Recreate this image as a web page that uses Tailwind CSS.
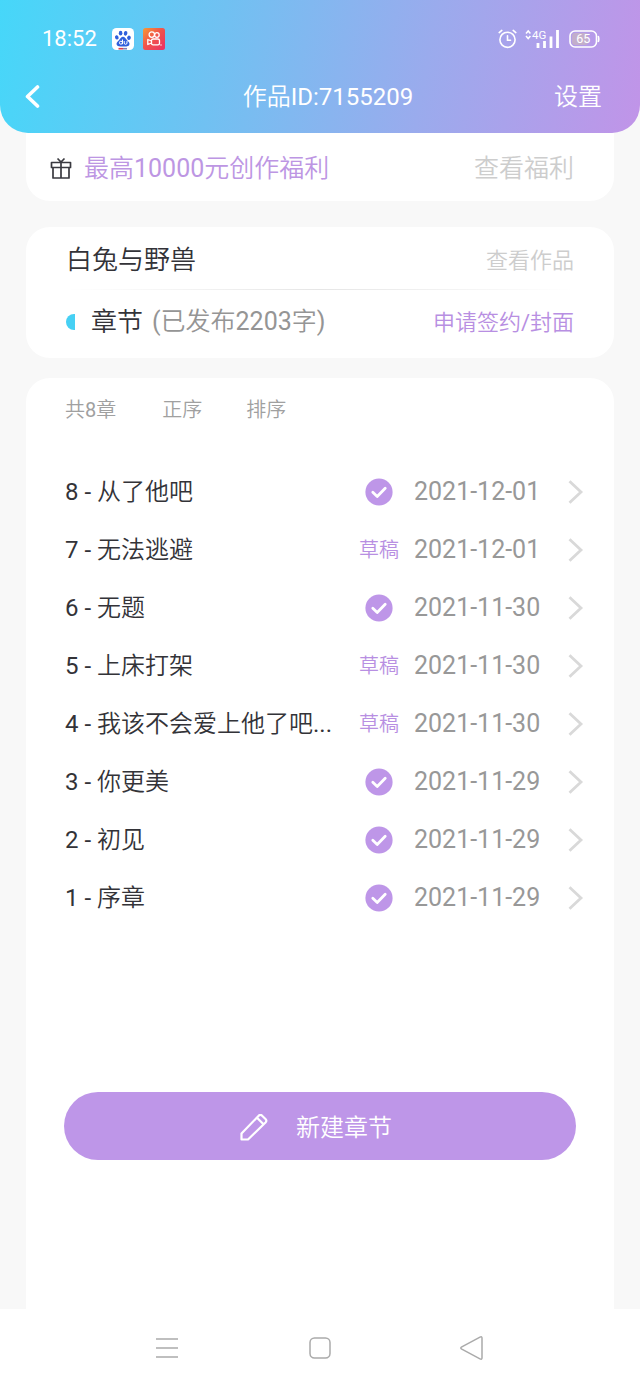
<!DOCTYPE html>
<html lang="zh-CN">
<head>
    <meta charset="UTF-8">
    <meta name="viewport" content="width=device-width, initial-scale=1.0">
    <title>作品ID:7155209</title>
    <script src="https://cdn.jsdelivr.net/npm/@tailwindcss/browser@4"></script>
</head>
<body class="flex min-h-screen flex-col bg-[#f8f8f8] font-['Roboto','Noto_Sans_CJK_SC_DemiLight','Noto_Sans_CJK_SC',sans-serif] text-[#333338]">
    <!-- Shared icons -->
    <svg class="hidden">
        <symbol id="icon-published" viewBox="0 0 28 28">
            <circle cx="14" cy="14" r="13.6" fill="#be96e8"/>
            <path d="M7.8 14.2l4.4 4.2 8-8.2" fill="none" stroke="#fff" stroke-width="2.8" stroke-linecap="round" stroke-linejoin="round"/>
        </symbol>
        <symbol id="icon-next" viewBox="0 0 16 24">
            <path d="M1.5 1.2L13 12 1.5 22.8" fill="none" stroke="#d9d9d9" stroke-width="2.8"/>
        </symbol>
    </svg>

    <!-- Header -->
    <header class="rounded-b-[28px] bg-linear-[100deg,#46d7f9_0%,#70c1f2_34%,#9aabed_66%,#c194e8_100%] text-white">
        <!-- Status bar -->
        <div class="flex h-[60px] items-center pr-10 pl-[42px] pt-[18px]">
            <span class="text-[22px] leading-none">18:52</span>
            <svg class="ml-[15px] size-[22px]" viewBox="0 0 22 22">
                <rect width="22" height="22" rx="4.5" fill="#fff"/>
                <g fill="#2f5fdc">
                    <ellipse cx="4.8" cy="9.4" rx="1.8" ry="2.2" transform="rotate(-15 4.8 9.4)"/>
                    <ellipse cx="8.6" cy="5.2" rx="1.8" ry="2.4"/>
                    <ellipse cx="13.6" cy="5.3" rx="1.8" ry="2.4" transform="rotate(10 13.6 5.3)"/>
                    <ellipse cx="17" cy="9.8" rx="1.8" ry="2.2" transform="rotate(15 17 9.8)"/>
                    <path d="M11 8.800c1.800 0 2.800 2.200 4 3.400 1.400 1.300 2.900 2.400 2.400 4.300-.5 2-3.200 2-6.400 2s-5.800 0-6.400-2c-.4-1.900 1-3 2.400-4.300C8.200 11 9.200 8.800 11 8.800z"/>
                </g>
                <g fill="none" stroke="#fff" stroke-width="1">
                    <circle cx="8.900" cy="14.700" r="1.500"/>
                    <path d="M10.500 11.500v4.700M12.200 13v2q0 1.300 1.400 1.300T15 15v-2"/>
                </g>
                <path d="M6.500 20.700H11" stroke="#e03a45" stroke-width="1.600"/>
                <path d="M11 20.700h4" stroke="#7d80b8" stroke-width="1.600"/>
            </svg>
            <svg class="ml-[9px] size-[22px]" viewBox="0 0 22 22">
                <defs>
                    <linearGradient id="video-bg" x1="0" y1="0" x2="1" y2="1">
                        <stop offset="0" stop-color="#f79a35"/>
                        <stop offset=".45" stop-color="#f1554a"/>
                        <stop offset="1" stop-color="#ea2f66"/>
                    </linearGradient>
                </defs>
                <rect width="22" height="22" rx="2.5" fill="url(#video-bg)"/>
                <g fill="none" stroke="#fff" stroke-width="1.300" stroke-linejoin="round">
                    <circle cx="8.800" cy="6.600" r="2.700"/>
                    <circle cx="13.900" cy="7" r="2.300"/>
                    <rect x="8.500" y="11" width="8" height="5.800" rx="1.600"/>
                    <path d="M8.500 13l-3.700-1.500v5l3.700-1.500"/>
                </g>
                <circle cx="18" cy="17" r=".7" fill="#fff"/>
            </svg>

            <svg class="ml-auto h-5 w-[19px]" viewBox="0 0 19 20" fill="none" stroke="#fff" stroke-width="1.600" stroke-linecap="round">
                <circle cx="9.500" cy="10.800" r="7.600"/>
                <path d="M9.500 6.800v4.500h3M1.200 3.600l2.600-2.200M17.800 3.600l-2.600-2.200"/>
            </svg>
            <svg class="ml-2 h-5 w-[35px]" viewBox="0 0 35 20">
                <path d="M1 4.500l2.200-2.500 2.200 2.500M1 7l2.200 2.500L5.400 7" fill="none" stroke="#fff" stroke-width="1.500"/>
                <text x="7" y="10" fill="#fff" font-size="11.500" font-family="Roboto">4G</text>
                <path d="M13 14v5M19.500 12v7M26 7.500V19M32.500 1v18" fill="none" stroke="#fff" stroke-width="2.800"/>
            </svg>
            <svg class="ml-[9px] h-[18px] w-[31px]" viewBox="0 0 31 18">
                <rect x="1" y="1" width="26.500" height="16" rx="5" fill="none" stroke="#fff" stroke-width="1.600"/>
                <rect x="3" y="3" width="16" height="12" rx="3" fill="#c3aecb"/>
                <path d="M29.200 6q1.200 3 0 6" fill="none" stroke="#fff" stroke-width="1.600"/>
                <text x="14.300" y="13.400" fill="#fff" font-size="12.500" font-family="Roboto" text-anchor="middle">65</text>
            </svg>
        </div>
        <!-- Title bar -->
        <div class="grid h-[73px] grid-cols-[1fr_auto_1fr] items-center px-6 text-2xl">
            <button type="button" aria-label="返回" class="justify-self-start">
                <svg class="block h-6 w-4" viewBox="0 0 16 24" fill="none" stroke="#fff" stroke-width="3.600" stroke-linecap="round" stroke-linejoin="round">
                    <path d="M13.500 2L3.500 11.500l10 9.500"/>
                </svg>
            </button>
            <h1 class="pl-4">作品ID:7155209</h1>
            <button type="button" class="mr-[14px] justify-self-end">设置</button>
        </div>
    </header>

    <main class="flex flex-1 flex-col px-[26px]">
        <!-- Bonus banner -->
        <section class="flex h-[68px] items-center rounded-b-3xl bg-white pt-1 pr-10 pl-6">
            <svg class="mr-3 h-6 w-[22px]" viewBox="0 0 22 24" fill="none" stroke="#3a3a40" stroke-width="1.700" stroke-linejoin="round">
                <path d="M1.500 5.500h19v5h-19zM3 10.500h16V21H3zM11 5.500V21M7.500 1.500L11 5l3.500-3.500"/>
            </svg>
            <a href="#" class="text-[25px] text-[#bd96e3]">最高10000元创作福利</a>
            <a href="#" class="ml-auto text-[25px] text-[#cdcdcd]">查看福利</a>
        </section>

        <!-- Work info -->
        <section class="mt-[26px] rounded-3xl bg-white px-10">
            <div class="flex h-[62px] items-center justify-between pt-1">
                <h2 class="text-[26px]">白兔与野兽</h2>
                <a href="#" class="text-[22px] text-[#cdcdcd]">查看作品</a>
            </div>
            <div class="h-px bg-linear-to-r from-transparent via-[#e6e6e6] to-transparent"></div>
            <div class="flex h-[68px] items-center pb-1">
                <span class="h-4 w-[9px] rounded-l-full bg-[#46d0f4]"></span>
                <h3 class="ml-4 text-[26px]">章节</h3>
                <span class="ml-[9px] text-[25px] text-[#959595]">(已发布2203字)</span>
                <a href="#" class="ml-auto text-[22px] text-[#b88fe2]">申请签约/封面</a>
            </div>
        </section>

        <!-- Chapters -->
        <section class="mt-5 flex-1 rounded-t-3xl bg-white">
            <div class="flex h-16 items-center pl-[39px] text-xl text-[#a0a0a0]">
                <span>共8章</span>
                <button type="button" class="ml-[46px]">正序</button>
                <button type="button" class="ml-11">排序</button>
            </div>

            <ul class="mt-[21px]">
                <li>
                    <a href="#" class="flex h-[58px] items-center pr-[30px] pl-[39px]">
                        <span class="min-w-0 flex-1 truncate text-2xl">8 - 从了他吧</span>
                        <span class="flex w-[42px] justify-center"><svg class="size-7"><use href="#icon-published"/></svg></span>
                        <time class="ml-[14px] w-32 text-[25px] text-[#989898]">2021-12-01</time>
                        <svg class="ml-[26px] h-6 w-4"><use href="#icon-next"/></svg>
                    </a>
                </li>
                <li>
                    <a href="#" class="flex h-[58px] items-center pr-[30px] pl-[39px]">
                        <span class="min-w-0 flex-1 truncate text-2xl">7 - 无法逃避</span>
                        <span class="flex w-[42px] justify-center text-xl text-[#b88fe2]">草稿</span>
                        <time class="ml-[14px] w-32 text-[25px] text-[#989898]">2021-12-01</time>
                        <svg class="ml-[26px] h-6 w-4"><use href="#icon-next"/></svg>
                    </a>
                </li>
                <li>
                    <a href="#" class="flex h-[58px] items-center pr-[30px] pl-[39px]">
                        <span class="min-w-0 flex-1 truncate text-2xl">6 - 无题</span>
                        <span class="flex w-[42px] justify-center"><svg class="size-7"><use href="#icon-published"/></svg></span>
                        <time class="ml-[14px] w-32 text-[25px] text-[#989898]">2021-11-30</time>
                        <svg class="ml-[26px] h-6 w-4"><use href="#icon-next"/></svg>
                    </a>
                </li>
                <li>
                    <a href="#" class="flex h-[58px] items-center pr-[30px] pl-[39px]">
                        <span class="min-w-0 flex-1 truncate text-2xl">5 - 上床打架</span>
                        <span class="flex w-[42px] justify-center text-xl text-[#b88fe2]">草稿</span>
                        <time class="ml-[14px] w-32 text-[25px] text-[#989898]">2021-11-30</time>
                        <svg class="ml-[26px] h-6 w-4"><use href="#icon-next"/></svg>
                    </a>
                </li>
                <li>
                    <a href="#" class="flex h-[58px] items-center pr-[30px] pl-[39px]">
                        <span class="min-w-0 flex-1 truncate text-2xl">4 - 我该不会爱上他了吧...</span>
                        <span class="flex w-[42px] justify-center text-xl text-[#b88fe2]">草稿</span>
                        <time class="ml-[14px] w-32 text-[25px] text-[#989898]">2021-11-30</time>
                        <svg class="ml-[26px] h-6 w-4"><use href="#icon-next"/></svg>
                    </a>
                </li>
                <li>
                    <a href="#" class="flex h-[58px] items-center pr-[30px] pl-[39px]">
                        <span class="min-w-0 flex-1 truncate text-2xl">3 - 你更美</span>
                        <span class="flex w-[42px] justify-center"><svg class="size-7"><use href="#icon-published"/></svg></span>
                        <time class="ml-[14px] w-32 text-[25px] text-[#989898]">2021-11-29</time>
                        <svg class="ml-[26px] h-6 w-4"><use href="#icon-next"/></svg>
                    </a>
                </li>
                <li>
                    <a href="#" class="flex h-[58px] items-center pr-[30px] pl-[39px]">
                        <span class="min-w-0 flex-1 truncate text-2xl">2 - 初见</span>
                        <span class="flex w-[42px] justify-center"><svg class="size-7"><use href="#icon-published"/></svg></span>
                        <time class="ml-[14px] w-32 text-[25px] text-[#989898]">2021-11-29</time>
                        <svg class="ml-[26px] h-6 w-4"><use href="#icon-next"/></svg>
                    </a>
                </li>
                <li>
                    <a href="#" class="flex h-[58px] items-center pr-[30px] pl-[39px]">
                        <span class="min-w-0 flex-1 truncate text-2xl">1 - 序章</span>
                        <span class="flex w-[42px] justify-center"><svg class="size-7"><use href="#icon-published"/></svg></span>
                        <time class="ml-[14px] w-32 text-[25px] text-[#989898]">2021-11-29</time>
                        <svg class="ml-[26px] h-6 w-4"><use href="#icon-next"/></svg>
                    </a>
                </li>
            </ul>

            <div class="px-[38px] pt-[165px] pb-10">
                <button type="button" class="flex h-[68px] w-full items-center justify-center gap-7 rounded-full bg-[#be96e8] pt-1 pr-2 text-2xl text-white">
                    <svg class="size-7" viewBox="0 0 28 28" fill="none" stroke="#fff" stroke-width="2.200" stroke-linejoin="round">
                        <path d="M1.500 25.500v-6L18.700 1.700q1.700-1.600 3.400 0l3.400 3.300q1.700 1.700 0 3.500L8 25.500zM17 3.800l6 6"/>
                    </svg>
                    新建章节
                </button>
            </div>
        </section>
    </main>

    <!-- System navigation -->
    <nav class="flex h-[78px] items-center justify-center gap-32 bg-white">
        <button type="button" aria-label="最近任务">
            <svg class="block size-6" viewBox="0 0 24 24" fill="none" stroke="#aaa" stroke-width="1.500">
                <path d="M0 3h22M0 12h22M0 21h22"/>
            </svg>
        </button>
        <button type="button" aria-label="主屏幕">
            <svg class="block size-6" viewBox="0 0 24 24" fill="none" stroke="#aaa" stroke-width="1.500">
                <rect x="2" y="2" width="20" height="20" rx="4.500"/>
            </svg>
        </button>
        <button type="button" aria-label="返回上一页">
            <svg class="block size-6" viewBox="0 0 24 24" fill="none" stroke="#aaa" stroke-width="1.500" stroke-linejoin="round">
                <path d="M1.800 10.800L20 1.200q2-1 2 1v19.600q0 2-2 1L1.800 13.200q-2-1.200 0-2.400z"/>
            </svg>
        </button>
    </nav>
</body>
</html>
